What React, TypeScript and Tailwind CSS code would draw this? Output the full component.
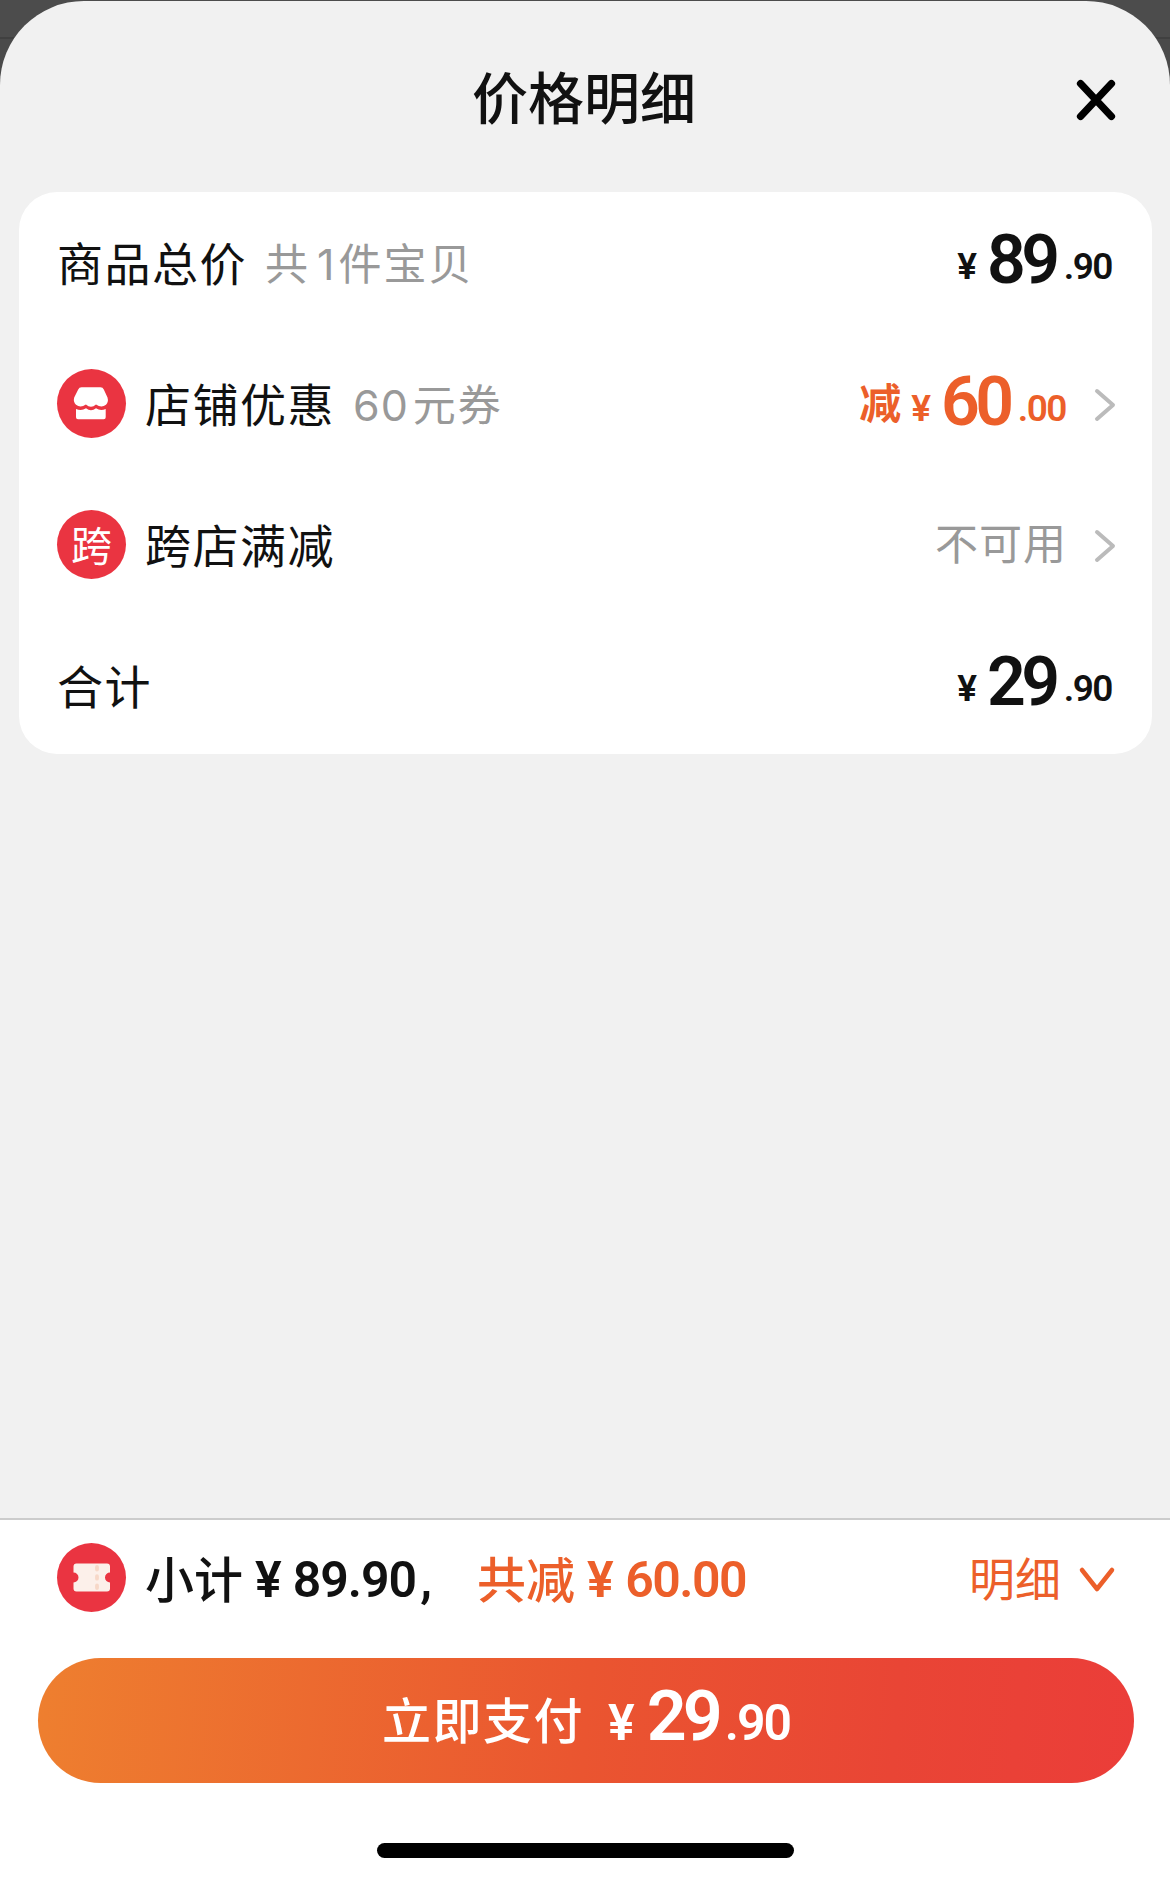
import type React from "react";
import clsx from "clsx";

function Price({ int, dec, size = "md", className }: {
  int: string; dec: string; size?: "md" | "lg"; className?: string;
}) {
  const lg = size === "lg";
  return (
    <span className={clsx("flex items-center whitespace-nowrap font-[Roboto,sans-serif] font-semibold leading-none", className)}>
      <span className="block leading-none">
        <span className={lg ? "text-[50px] mr-3" : "text-[37px] mr-2.5 align-[4px]"}>¥</span>
        <span className={lg ? "text-[70px] tracking-[-4px]" : "text-[68px] tracking-[-4.5px]"}>{int}</span>
        <span className={lg ? "text-[50px] tracking-[-2px] ml-1.5" : "text-[37px] tracking-[-1.5px] ml-2 align-[4px]"}>.{dec}</span>
      </span>
    </span>
  );
}

function Badge({ children }: { children: React.ReactNode }) {
  return (
    <span className="w-[69px] h-[69px] mr-[19px] rounded-full bg-[#ea3441] text-white flex items-center justify-center shrink-0">
      {children}
    </span>
  );
}

function ShopIcon() {
  return (
    <svg width="69" height="69" viewBox="0 0 69 69" fill="#fff">
      <path d="M24.5 18.3H43.5Q45.8 18.3 46.8 20.5L50.5 28.5Q51.8 33 49 35.8Q44.500 39.500 39 35.500Q34 40 28.900 35.500Q23.500 39.500 19 35.800Q16 33 17.200 28.500L21.200 20.500Q22.200 18.300 24.500 18.300z" />
      <path d="M19 40Q24.500 42.500 29 39.300Q34 43 39 39.300Q43.500 42.500 48.700 40V48.300q0 2-2 2H21q-2 0-2-2z" />
    </svg>
  );
}

function TicketIcon() {
  return (
    <svg width="69" height="69" viewBox="0 0 69 69">
      <path
        d="M19.500 20.500h30.500q3 0 3 3v6a5 5 0 0 0 0 10v6q0 3-3 3H19.500q-3 0-3-3v-6a5 5 0 0 0 0-10v-6q0-3 3-3z"
        fill="#fcf0ea"
      />
      <path d="M40 24v2.500M40 33.200v2.500M40 42.500v2.500" stroke="#f7d8c8" strokeWidth="3.800" strokeLinecap="round" />
    </svg>
  );
}

function ChevronRight() {
  return (
    <svg width="22" height="36" viewBox="0 0 22 36" fill="none" className="ml-[28px] mr-[36px] mt-0.5">
      <path d="M3 4 L19 18 L3 32" stroke="#bbb" strokeWidth="4" strokeLinecap="round" strokeLinejoin="round" />
    </svg>
  );
}

function Row({ badge, label, note, children }: {
  badge?: React.ReactNode; label: string; note?: React.ReactNode; children: React.ReactNode;
}) {
  return (
    <div className="h-[141px] pl-[38px] flex items-center shrink-0">
      {badge}
      <span className="pb-1 text-[46px] tracking-[1.5px] leading-none">{label}</span>
      {note && (
        <span className="ml-[18px] pt-[3px] text-[43px] tracking-[2px] leading-none text-[#999] font-['Inter','Noto_Sans_CJK_SC',sans-serif]">
          {note}
        </span>
      )}
      <div className="ml-auto flex items-center">{children}</div>
    </div>
  );
}

export default function App() {
  return (
    <div className="w-[1170px] h-[1882px] bg-[linear-gradient(#4c4c4c_37px,#404040_37px,#404040_39px,#4a4a4a_39px)] pt-px overflow-hidden font-['Noto_Sans_CJK_SC',sans-serif] text-[#111]">
      <div className="h-[1881px] rounded-t-[84px] bg-[#f1f1f1] flex flex-col">
        {/* Sheet header */}
        <header className="h-[191px] pl-[94px] pr-[52px] flex items-center">
          <h1 className="flex-1 pb-1 text-center text-[56px] font-medium leading-none">价格明细</h1>
          <svg width="44" height="44" viewBox="0 0 44 44" fill="none" className="mt-1.5" aria-label="关闭">
            <path d="M6.500 5.500 L37.500 38.500 M37.500 5.500 L6.500 38.500" stroke="#000" strokeWidth="7.2" strokeLinecap="round" />
          </svg>
        </header>

        {/* Price breakdown */}
        <section className="ml-[19px] mr-[18px] h-[562px] rounded-[38px] bg-white flex flex-col overflow-hidden">
          <Row label="商品总价" note={<>共<span className="ml-[7px] mr-0.5">1</span>件宝贝</>}>
            <Price int="89" dec="90" className="pb-[5px] mr-[40px]" />
          </Row>
          <Row
            badge={<Badge><ShopIcon /></Badge>}
            label="店铺优惠"
            note={<><span className="mr-1 tracking-[1px]">60</span>元券</>}
          >
            <span className="mr-2.5 pb-1.5 text-[42px] font-bold leading-none text-[#ec5f2a]">减</span>
            <Price int="60" dec="00" className="pb-1 text-[#ec5f2a]" />
            <ChevronRight />
          </Row>
          <Row badge={<Badge><span className="pb-0.5 text-[41px] leading-none">跨</span></Badge>} label="跨店满减">
            <span className="pb-1.5 text-[43px] tracking-[1px] -mr-px leading-none text-[#999]">不可用</span>
            <ChevronRight />
          </Row>
          <Row label="合计">
            <Price int="29" dec="90" className="pb-[7px] mr-[40px]" />
          </Row>
        </section>

        {/* Pay bar */}
        <footer className="mt-auto h-[364px] border-t-2 border-[#ccc] bg-white flex flex-col items-center">
          <div className="w-full h-[115px] pl-[57px] pr-[53px] flex items-center text-[49px] font-medium leading-none">
            <Badge><TicketIcon /></Badge>
            <span className="pb-[3px]">小计</span>
            <span className="ml-3 pt-1 font-[Roboto,sans-serif] font-semibold text-[50px] tracking-[-1px]">
              ¥<span className="ml-3">89.90</span><span className="ml-1">,</span>
            </span>
            <span className="ml-[46px] pb-[3px] text-[#ec5f2a]">共减</span>
            <span className="ml-3 pt-1 font-[Roboto,sans-serif] font-semibold text-[50px] tracking-[-1.5px] text-[#ec5f2a]">
              ¥<span className="ml-[13px]">60.00</span>
            </span>
            <span className="ml-auto pb-[3px] text-[46px] font-normal text-[#ec5f2a]">明细</span>
            <svg width="40" height="30" viewBox="0 0 40 30" fill="none" className="ml-4 mt-1">
              <path d="M5 5 L20 24 L35 5" stroke="#ec5f2a" strokeWidth="4.500" strokeLinecap="round" strokeLinejoin="round" />
            </svg>
          </div>
          <button className="ml-0.5 mt-[23px] w-[1096px] h-[125px] rounded-full bg-[linear-gradient(95deg,#ee7f2f_0%,#ea5530_50%,#e94535_78%,#eb3d39_100%)] text-white flex items-center justify-center">
            <span className="pb-[7px] text-[49px] font-medium tracking-[1.5px] leading-none">立即支付</span>
            <Price int="29" dec="90" size="lg" className="ml-[24px] pb-2.5" />
          </button>
          <div className="mt-[60px] w-[417px] h-[15px] rounded-full bg-black" />
        </footer>
      </div>
    </div>
  );
}
